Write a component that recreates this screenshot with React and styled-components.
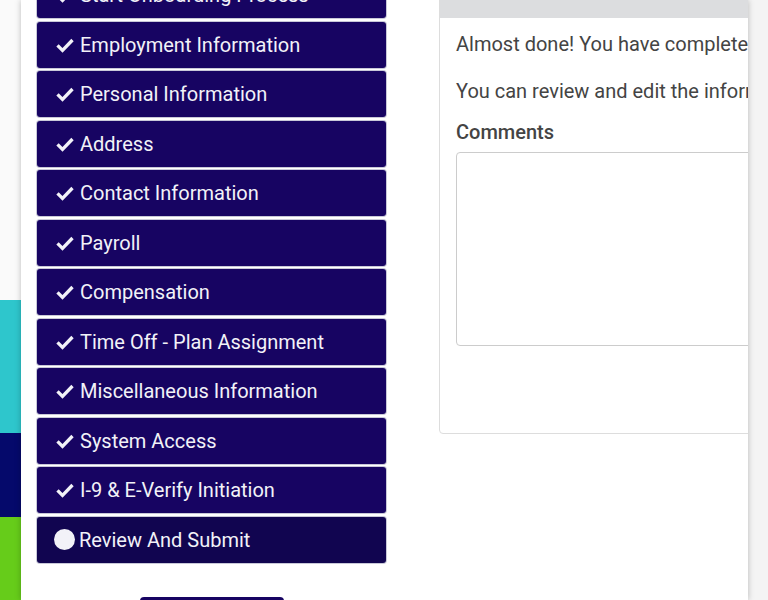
import React from 'react'
import styled, { createGlobalStyle } from 'styled-components'

const Global = createGlobalStyle`
  body { margin: 0; font-family: Roboto, "Liberation Sans", sans-serif; background: #fff; }
`

const Screen = styled.div`
  width: 768px;
  height: 600px;
  overflow: hidden;
  display: flex;
  background: #f4f4f4;
`

const Stripe = styled.div`
  width: 21px;
  flex-shrink: 0;
  display: flex;
  flex-direction: column;
  background: #fafafa;
`

const Band = styled.div`
  height: ${p => p.h}px;
  flex-shrink: 0;
  background: ${p => p.c};
`

const Page = styled.div`
  width: 727px;
  flex-shrink: 0;
  background: #fff;
  box-shadow: 0 0 6px rgba(0,0,0,0.25);
  display: flex;
  align-items: flex-start;
  gap: 53px;
  padding-left: 16px;
  overflow: hidden;
  box-sizing: border-box;
`

const Steps = styled.div`
  width: 349px;
  flex-shrink: 0;
  margin-top: -28px;
  display: flex;
  flex-direction: column;
  gap: 3.5px;
  align-items: center;
`

const Step = styled.div`
  width: 100%;
  flex-shrink: 0;
  box-sizing: border-box;
  height: 46px;
  border-radius: 3px;
  background: ${p => (p.current ? '#110550' : '#170462')};
  box-shadow: 0 0 0 1px #c8c8d8;
  color: #f2f2f8;
  font-size: 20px;
  display: flex;
  align-items: center;
  gap: 4px;
  padding-left: 17px;
  white-space: nowrap;
`

const Dot = styled.span`
  width: 21px;
  height: 21px;
  border-radius: 50%;
  background: #f2f2f8;
`

const Next = styled.div`
  width: 144px;
  height: 40px;
  flex-shrink: 0;
  margin-top: 31px;
  border-radius: 4px;
  background: #170462;
`

const Card = styled.div`
  margin-top: -20px;
  width: 330px;
  height: 452px;
  border: 1px solid #ddd;
  border-radius: 4px;
  flex-shrink: 0;
  display: flex;
  flex-direction: column;
`

const CardHead = styled.div`
  height: 37px;
  background: #dcdddf;
`

const Body = styled.div`
  padding: 14px 0 0 16px;
  color: #444;
  font-size: 20px;
  white-space: nowrap;
`

const Para = styled.p`
  margin: 0 0 23px;
`

const Label = styled.div`
  font-weight: 500;
  margin-top: -6px;
  margin-bottom: 8px;
`

const Area = styled.div`
  height: 192px;
  border: 1px solid #ccc;
  border-radius: 4px;
`

const Check = () => (
  <svg width="22" height="20" viewBox="0 0 24 24">
    <path d="M3 12.5l6 6L21 6" fill="none" stroke="#f2f2f8" strokeWidth="4" />
  </svg>
)

const steps = [
  'Start Onboarding Process', 'Employment Information', 'Personal Information', 'Address',
  'Contact Information', 'Payroll', 'Compensation', 'Time Off - Plan Assignment',
  'Miscellaneous Information', 'System Access', 'I-9 & E-Verify Initiation',
]

export default function App() {
  return (
    <Screen>
      <Global />
      <Stripe>
        <Band h={300} c="#fafafa" />
        <Band h={133} c="#2ec6cc" />
        <Band h={84} c="#05096b" />
        <Band h={83} c="#66cc1a" />
      </Stripe>
      <Page>
        <Steps>
          {steps.map(s => (
            <Step key={s}><Check />{s}</Step>
          ))}
          <Step current><Dot />Review And Submit</Step>
          <Next />
        </Steps>
        <Card>
          <CardHead />
          <Body>
            <Para>Almost done! You have completed all the steps.</Para>
            <Para>You can review and edit the information before submitting.</Para>
            <Label>Comments</Label>
            <Area />
          </Body>
        </Card>
      </Page>
    </Screen>
  )
}
